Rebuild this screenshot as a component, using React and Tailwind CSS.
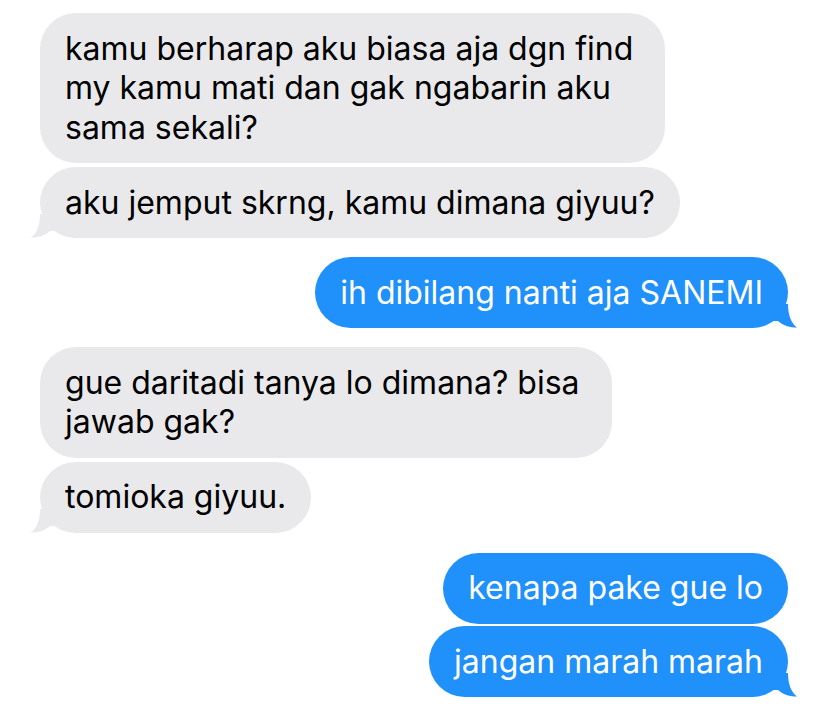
const messages = [
  {
    from: "them",
    lines: ["kamu berharap aku biasa aja dgn find", "my kamu mati dan gak ngabarin aku", "sama sekali?"],
    tail: false,
    w: "w-[625px]"
  },
  { from: "them", lines: ["aku jemput skrng, kamu dimana giyuu?"], tail: true, gap: "mt-[4px]" },
  { from: "me", lines: ["ih dibilang nanti aja SANEMI"], tail: true, gap: "mt-[19px]" },
  {
    from: "them",
    lines: ["gue daritadi tanya lo dimana? bisa", "jawab gak?"],
    tail: false,
    gap: "mt-[19px]",
    w: "w-[572px]"
  },
  { from: "them", lines: ["tomioka giyuu."], tail: true, gap: "mt-[4px]" },
  { from: "me", lines: ["kenapa pake gue lo"], tail: false, gap: "mt-[20px]" },
  { from: "me", lines: ["jangan marah marah"], tail: true, gap: "mt-[2.5px]" }
];

function Tail({ side }) {
  if (side === "them") {
    return (
      <svg
        className="absolute bottom-0 left-[-9px] h-[24px] w-[26px]"
        viewBox="0 0 26 24"
      >
        <path d="M9 0 C9 11 6 19 0 23.5 C7 23.5 13 22 19 17 L26 17 L26 0 Z" fill="#e9e9eb" />
      </svg>
    );
  }
  return (
    <svg
      className="absolute bottom-0 right-[-9px] h-[24px] w-[26px]"
      viewBox="0 0 26 24"
    >
      <path d="M17 0 C17 11 20 19 26 23.5 C19 23.5 13 22 7 17 L0 17 L0 0 Z" fill="#2090fa" />
    </svg>
  );
}

export default function App() {
  return (
    <div
      className="h-[717px] w-[828px] overflow-hidden bg-white pt-[13px]"
      style={{ fontFamily: "Inter, 'Noto Sans', sans-serif" }}
    >
      <div className="flex flex-col px-[40px]">
        {messages.map((m, i) => {
          const mine = m.from === "me";
          return (
            <div
              key={i}
              className={`relative ${m.gap || ""} ${mine ? "self-end" : "self-start"} ${m.w || "w-fit"}`}
            >
              {m.tail && <Tail side={m.from} />}
              <div
                className={`relative rounded-[36px] px-[25px] py-[15.75px] text-[32px] leading-[39.5px] whitespace-nowrap ${
                  mine ? "bg-[#2090fa] text-white" : "bg-[#e9e9eb] text-black"
                }`}
              >
                {m.lines.map((l, j) => (
                  <div key={j}>{l}</div>
                ))}
              </div>
            </div>
          );
        })}
      </div>
    </div>
  );
}
